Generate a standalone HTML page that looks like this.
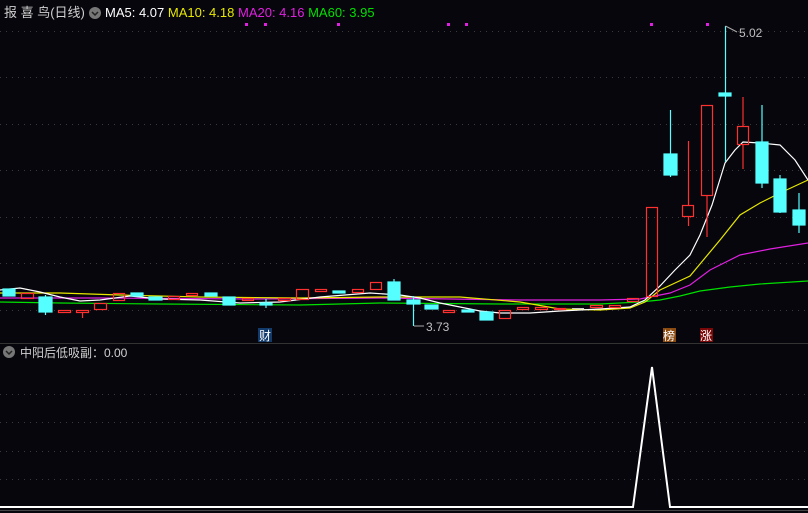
<!DOCTYPE html>
<html><head><meta charset="utf-8"><style>
html,body{margin:0;padding:0;background:#06060c;}
svg{display:block}
text{font-family:"Liberation Sans","Noto Sans CJK SC",sans-serif;}
</style></head><body>
<svg width="808" height="513" viewBox="0 0 808 513" xmlns="http://www.w3.org/2000/svg">
<rect width="808" height="513" fill="#06060c"/>
<g stroke="#3a3a3a" stroke-width="1" stroke-dasharray="1 5">
<line x1="0" y1="31.5" x2="808" y2="31.5"/><line x1="0" y1="77.5" x2="808" y2="77.5"/>
<line x1="0" y1="124.5" x2="808" y2="124.5"/><line x1="0" y1="170.5" x2="808" y2="170.5"/>
<line x1="0" y1="217.5" x2="808" y2="217.5"/><line x1="0" y1="263.5" x2="808" y2="263.5"/>
<line x1="0" y1="310.5" x2="808" y2="310.5"/>
<line x1="0" y1="394.5" x2="808" y2="394.5"/><line x1="0" y1="422.5" x2="808" y2="422.5"/>
<line x1="0" y1="451.5" x2="808" y2="451.5"/><line x1="0" y1="479.5" x2="808" y2="479.5"/>
</g>
<line x1="0" y1="343.5" x2="808" y2="343.5" stroke="#333" stroke-width="1"/>
<line x1="0" y1="510.5" x2="808" y2="510.5" stroke="#444" stroke-width="1"/>
<g fill="#e020e0">
<rect x="245" y="23" width="3" height="3"/><rect x="264" y="23" width="3" height="3"/><rect x="337" y="23" width="3" height="3"/><rect x="447" y="23" width="3" height="3"/><rect x="465" y="23" width="3" height="3"/><rect x="650" y="23" width="3" height="3"/><rect x="706" y="23" width="3" height="3"/>
</g>
<!-- MA lines -->
<polyline fill="none" stroke="#00e000" stroke-width="1.2" points="0,302 60,303 160,304 300,305 380,303 500,304 600,304 640,302 660,300 680,296 700,291 730,287 760,284 808,281"/>
<polyline fill="none" stroke="#e020e0" stroke-width="1.2" points="0,298 100,298 250,299 380,298 450,299 520,300 600,300 640,299 655,296 670,293 690,285 710,270 740,255 770,249 808,243"/>
<polyline fill="none" stroke="#e8e800" stroke-width="1.2" points="0,293 60,293 120,295 200,297 300,298 380,297 460,297 520,302 560,309 600,310 630,308 645,302 660,290 675,283 690,276 705,258 720,240 740,215 760,203 780,193 808,180"/>
<polyline fill="none" stroke="#ffffff" stroke-width="1.2" points="0,290 20,288 40,292 60,297 80,301 100,300 130,296 160,299 200,300 240,303 280,302 320,297 370,293 400,295 420,298 440,303 460,307 480,311 500,313 530,313 560,311 600,309 630,307 645,300 660,286 675,270 690,255 700,235 712,205 725,163 735,150 743,142 760,143 780,145 795,160 808,180"/>
<!-- candles -->
<g stroke-width="1.2">
<g fill="#55ffff" stroke="#55ffff">
<rect x="3" y="289" width="12" height="7"/><rect x="39" y="297" width="13" height="15"/><line x1="45.5" y1="295" x2="45.5" y2="315"/>
<rect x="131" y="293" width="12" height="3"/><rect x="149" y="297" width="13" height="3"/><rect x="205" y="293" width="12" height="3"/>
<rect x="223" y="297" width="12" height="8"/><rect x="260" y="303" width="12" height="2"/><line x1="266" y1="299" x2="266" y2="308"/><rect x="333" y="291" width="12" height="2"/>
<rect x="388" y="282" width="12" height="18"/><line x1="394" y1="279" x2="394" y2="300"/>
<rect x="407" y="300" width="13" height="4"/><line x1="413.5" y1="296" x2="413.5" y2="326"/>
<rect x="425" y="305" width="13" height="4"/><rect x="462" y="310" width="12" height="2"/><rect x="480" y="312" width="13" height="8"/>
<line x1="670.5" y1="110" x2="670.5" y2="177"/><rect x="664" y="154" width="13" height="21"/>
<line x1="725.5" y1="26" x2="725.5" y2="162"/><rect x="719" y="93" width="12" height="3"/>
<line x1="762" y1="105" x2="762" y2="188"/><rect x="756" y="142" width="12" height="41"/>
<line x1="780" y1="175" x2="780" y2="213"/><rect x="774" y="179" width="12" height="33"/>
<line x1="799" y1="193" x2="799" y2="233"/><rect x="793" y="210" width="12" height="15"/>
</g>
<g fill="none" stroke="#ff3030">
<rect x="21.5" y="293.5" width="12" height="5"/><rect x="58.5" y="310.5" width="12" height="2"/><rect x="76.5" y="310.5" width="12" height="2"/><line x1="82.5" y1="313" x2="82.5" y2="318"/>
<rect x="94.5" y="303.5" width="12" height="6"/><rect x="113.5" y="293.5" width="11" height="7"/><rect x="168.5" y="296.5" width="11" height="3"/><rect x="186.5" y="293.5" width="11" height="2"/>
<rect x="242.5" y="298.5" width="11" height="2"/><rect x="278.5" y="298.5" width="12" height="2"/><rect x="296.5" y="289.5" width="12" height="10"/>
<rect x="315.5" y="289.5" width="11" height="2"/><rect x="352.5" y="289.5" width="11" height="3"/><rect x="370.5" y="282.5" width="11" height="7"/>
<rect x="443.5" y="310.5" width="11" height="2"/><rect x="499.5" y="310.5" width="11" height="8"/><rect x="517.5" y="307.5" width="11" height="2"/>
<rect x="535.5" y="307.5" width="12" height="2"/><rect x="554.5" y="308.5" width="11" height="1"/><rect x="590.5" y="305.5" width="12" height="2"/>
<rect x="609.5" y="305.5" width="11" height="2"/><rect x="627.5" y="298.5" width="11" height="3"/>
<rect x="646.5" y="207.5" width="11" height="89"/>
<line x1="688.5" y1="141" x2="688.5" y2="205"/><line x1="688.5" y1="217" x2="688.5" y2="226"/><rect x="682.5" y="205.5" width="11" height="11"/>
<line x1="707" y1="196" x2="707" y2="237"/><rect x="701.5" y="105.5" width="11" height="90"/>
<line x1="743" y1="97" x2="743" y2="126"/><line x1="743" y1="145" x2="743" y2="169"/><rect x="737.5" y="126.5" width="11" height="18"/>
</g>
<rect x="572" y="308" width="12" height="1" fill="#ccc"/>
</g>
<!-- labels -->
<line x1="725.5" y1="26" x2="737" y2="32" stroke="#aaa" stroke-width="1"/>
<text x="739" y="37" fill="#c0c0c0" font-size="12">5.02</text>
<line x1="414" y1="326" x2="424" y2="326" stroke="#aaa" stroke-width="1"/>
<text x="426" y="331" fill="#c0c0c0" font-size="12">3.73</text>
<rect x="258" y="328" width="14" height="14" fill="#123a6a"/><text x="259" y="340" fill="#fff" font-size="12">财</text>
<rect x="663" y="328" width="13" height="14" fill="#8a4a10"/><text x="663" y="340" fill="#fff" font-size="12">榜</text>
<rect x="700" y="328" width="13" height="14" fill="#7a0808"/><text x="700" y="340" fill="#fff" font-size="12">涨</text>
<!-- indicator -->
<polyline fill="none" stroke="#ffffff" stroke-width="2" points="0,507 633,507 652,367 670,507 808,507"/>
<!-- header -->
<text x="4" y="17" fill="#d0d0d0" font-size="13">报 喜 鸟(日线)</text>
<circle cx="95" cy="13" r="6" fill="#777"/><path d="M92 12 L95 15 L98 12" stroke="#222" stroke-width="1.5" fill="none"/>
<text x="105" y="17" font-size="13"><tspan fill="#ffffff">MA5: 4.07 </tspan><tspan fill="#e8e800">MA10: 4.18 </tspan><tspan fill="#e020e0">MA20: 4.16 </tspan><tspan fill="#00e000">MA60: 3.95</tspan></text>
<circle cx="9" cy="352" r="6" fill="#777"/><path d="M6 351 L9 354 L12 351" stroke="#222" stroke-width="1.5" fill="none"/>
<text x="20" y="357" fill="#d0d0d0" font-size="12">中阳后低吸副：0.00</text>
</svg>
</body></html>
